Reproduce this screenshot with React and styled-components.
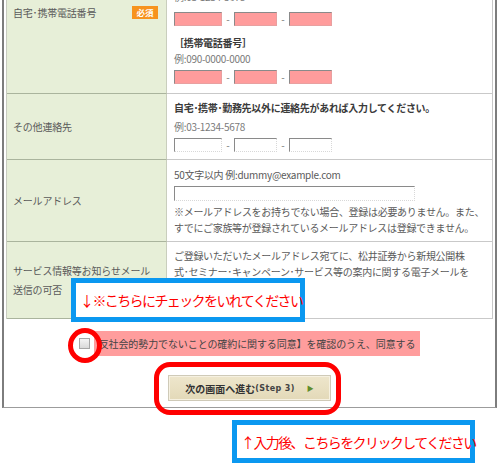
import React from 'react';
import styled, { createGlobalStyle } from 'styled-components';

const GlobalStyle = createGlobalStyle`
  html, body {
    margin: 0;
    padding: 0;
    background: #fff;
  }
  body {
    font-family: "Noto Sans CJK JP", "Noto Sans", sans-serif;
    font-size: 10px;
    color: #555;
    overflow: hidden;
  }
`;

const Page = styled.div`
  position: relative;
  width: 500px;
  height: 464px;
  overflow: hidden;
`;

/* page is scrolled, so the frame starts above the top edge */
const Frame = styled.div`
  margin: -69px 3px 0 2px;
  padding: 0 2px 6px 2px;
  border-left: 2px solid #7d7d7d;
  border-right: 2px solid #7d7d7d;
  border-bottom: 1px solid #9c9c9c;
`;

const Table = styled.div`
  border-left: 1px solid #c8cbc0;
  border-right: 1px solid #c8c8c8;
`;

const Row = styled.div`
  display: grid;
  grid-template-columns: 160px 1fr;
`;

const LabelCell = styled.div`
  display: flex;
  align-items: center;
  justify-content: space-between;
  padding: 0 8px 0 6px;
  background: #e7efd8;
  border-right: 1px solid #c9cebd;
  border-bottom: 1px solid #aab49d;
  color: #5a5a5a;
  font-size: 10px;
  line-height: 19px;
  letter-spacing: -0.2px;
  white-space: nowrap;
`;

const Badge = styled.span`
  display: inline-block;
  width: 26px;
  height: 13px;
  line-height: 13px;
  background: #f7931e;
  color: #fff;
  font-size: 8.5px;
  font-weight: bold;
  text-align: center;
  letter-spacing: 0;
`;

const ValueCell = styled.div`
  padding: ${p => p.$pad || '7px 8px 7px 7px'};
  border-bottom: 1px solid #c9c9c9;
  background: #fff;
  min-width: 0;
`;

/* the part of the first row that is scrolled out of view */
const Spacer = styled.div`
  height: ${p => p.$h}px;
`;

const Line = styled.div`
  line-height: 16px;
  font-size: 10px;
  letter-spacing: -0.3px;
  white-space: nowrap;
  color: ${p => (p.$bold ? '#3a3a3a' : p.$muted ? '#7a7a7a' : '#5a5a5a')};
  font-weight: ${p => (p.$bold ? 'bold' : 'normal')};
  margin-top: ${p => p.$gap || 0}px;
`;

const InputRow = styled.div`
  display: flex;
  align-items: center;
  margin-top: ${p => p.$gap || 3}px;
  height: 14px;
`;

const TextBox = styled.div`
  box-sizing: border-box;
  width: ${p => p.$w}px;
  height: ${p => p.$h || 14}px;
  background: ${p => (p.$pink ? '#ff9c9c' : '#fff')};
  border-top: 1px solid #8a8a8a;
  border-left: 1px solid #8a8a8a;
  border-bottom: 1px ${p => (p.$pink ? 'solid #e8a0a0' : 'dotted #d8d8d8')};
  border-right: 1px ${p => (p.$pink ? 'solid #e8a0a0' : 'dotted #d8d8d8')};
`;

const Dash = styled.span`
  width: 12px;
  text-align: center;
  color: #777;
  font-size: 10px;
  line-height: 14px;
`;

const AgreeRow = styled.div`
  display: flex;
  align-items: center;
  justify-content: center;
  margin-top: 12px;
  height: 25px;
`;

const CheckBox = styled.span`
  box-sizing: border-box;
  width: 11px;
  height: 11px;
  margin-right: 4px;
  border: 1px solid #a6a6a6;
  background: linear-gradient(#f4f4f4, #d9d9d9);
`;

const AgreeLabel = styled.span`
  height: 25px;
  line-height: 25px;
  padding: 0 5px 0 5px;
  background: #ff9d9d;
  color: #444;
  font-size: 10px;
  letter-spacing: -0.1px;
  white-space: nowrap;
`;

const ButtonWrap = styled.div`
  display: flex;
  justify-content: center;
  margin-top: 19px;
`;

const NextButton = styled.div`
  box-sizing: border-box;
  display: flex;
  align-items: center;
  justify-content: center;
  width: 163px;
  height: 26px;
  border: 1px solid #cfcab8;
  box-shadow: inset 0 0 0 1px #f6f1e1;
  background: linear-gradient(#eee6cc, #e3d9b8);
  color: #333;
  font-size: 10px;
  font-weight: bold;
  white-space: nowrap;
`;

const StepText = styled.span`
  font-family: "DejaVu Sans", sans-serif;
  font-size: 8px;
  letter-spacing: 0.4px;
  color: #444;
`;

const Arrow = styled.span`
  margin-left: 12px;
  color: #5f8c2c;
  font-size: 7px;
`;

/* annotation overlays drawn over the captured page */
const Note = styled.div`
  position: absolute;
  left: ${p => p.$x}px;
  top: ${p => p.$y}px;
  width: ${p => p.$w}px;
  height: ${p => p.$h}px;
  box-sizing: border-box;
  border: 5px solid #0b98f0;
  background: #fff;
  display: flex;
  align-items: center;
  padding-left: 4px;
  color: #ff0000;
  font-size: 14px;
  letter-spacing: -1.6px;
  white-space: nowrap;
`;

const Ring = styled.div`
  position: absolute;
  left: ${p => p.$x}px;
  top: ${p => p.$y}px;
  width: ${p => p.$w}px;
  height: ${p => p.$h}px;
  box-sizing: border-box;
  border: 5px solid #ff0000;
  border-radius: ${p => p.$r};
`;

const TelRow = ({ pink, gap }) => (
  <InputRow $gap={gap}>
    <TextBox $w={48} $pink={pink} />
    <Dash>-</Dash>
    <TextBox $w={43} $pink={pink} />
    <Dash>-</Dash>
    <TextBox $w={43} $pink={pink} />
  </InputRow>
);

export default function App() {
  return (
    <Page>
      <GlobalStyle />
      <Frame>
        <Table>
          <Row>
            <LabelCell>
              <span>自宅･携帯電話番号</span>
              <Badge>必須</Badge>
            </LabelCell>
            <ValueCell $pad="5px 8px 9px 7px">
              <Spacer $h={53} />
              <Line $muted>例:03-1234-5678</Line>
              <TelRow pink gap={7} />
              <Line $bold $gap={9}>［携帯電話番号］</Line>
              <Line $muted>例:090-0000-0000</Line>
              <TelRow pink />
            </ValueCell>
          </Row>

          <Row>
            <LabelCell>その他連絡先</LabelCell>
            <ValueCell $pad="6px 8px 7px 7px">
              <Line $bold>自宅･携帯･勤務先以外に連絡先があれば入力してください。</Line>
              <Line $muted $gap={3}>例:03-1234-5678</Line>
              <TelRow />
            </ValueCell>
          </Row>

          <Row>
            <LabelCell>メールアドレス</LabelCell>
            <ValueCell $pad="7px 8px 5px 7px">
              <Line>50文字以内 例:dummy@example.com</Line>
              <InputRow>
                <TextBox $w={241} $h={15} />
              </InputRow>
              <Line $gap={4}>※メールアドレスをお持ちでない場合、登録は必要ありません。また、</Line>
              <Line>すでにご家族等が登録されているメールアドレスは登録できません。</Line>
            </ValueCell>
          </Row>

          <Row>
            <LabelCell>
              <span>
                サービス情報等お知らせメール
                <br />
                送信の可否
              </span>
            </LabelCell>
            <ValueCell $pad="6px 8px 38px 7px">
              <Line>ご登録いただいたメールアドレス宛てに、松井証券から新規公開株</Line>
              <Line>式･セミナー･キャンペーン･サービス等の案内に関する電子メールを</Line>
            </ValueCell>
          </Row>
        </Table>

        <AgreeRow>
          <CheckBox />
          <AgreeLabel>反社会的勢力でないことの確約に関する同意】を確認のうえ、同意する</AgreeLabel>
        </AgreeRow>

        <ButtonWrap>
          <NextButton>
            次の画面へ進む<StepText>(Step 3)</StepText>
            <Arrow>▶</Arrow>
          </NextButton>
        </ButtonWrap>
      </Frame>

      <Note $x={71} $y={278} $w={234} $h={44}>↓※こちらにチェックをいれてください</Note>
      <Ring $x={68} $y={328} $w={34} $h={35} $r="50%" />
      <Ring $x={154} $y={362} $w={187} $h={53} $r="16px" />
      <Note $x={232} $y={420} $w={243} $h={43}>↑入力後、こちらをクリックしてください</Note>
    </Page>
  );
}
